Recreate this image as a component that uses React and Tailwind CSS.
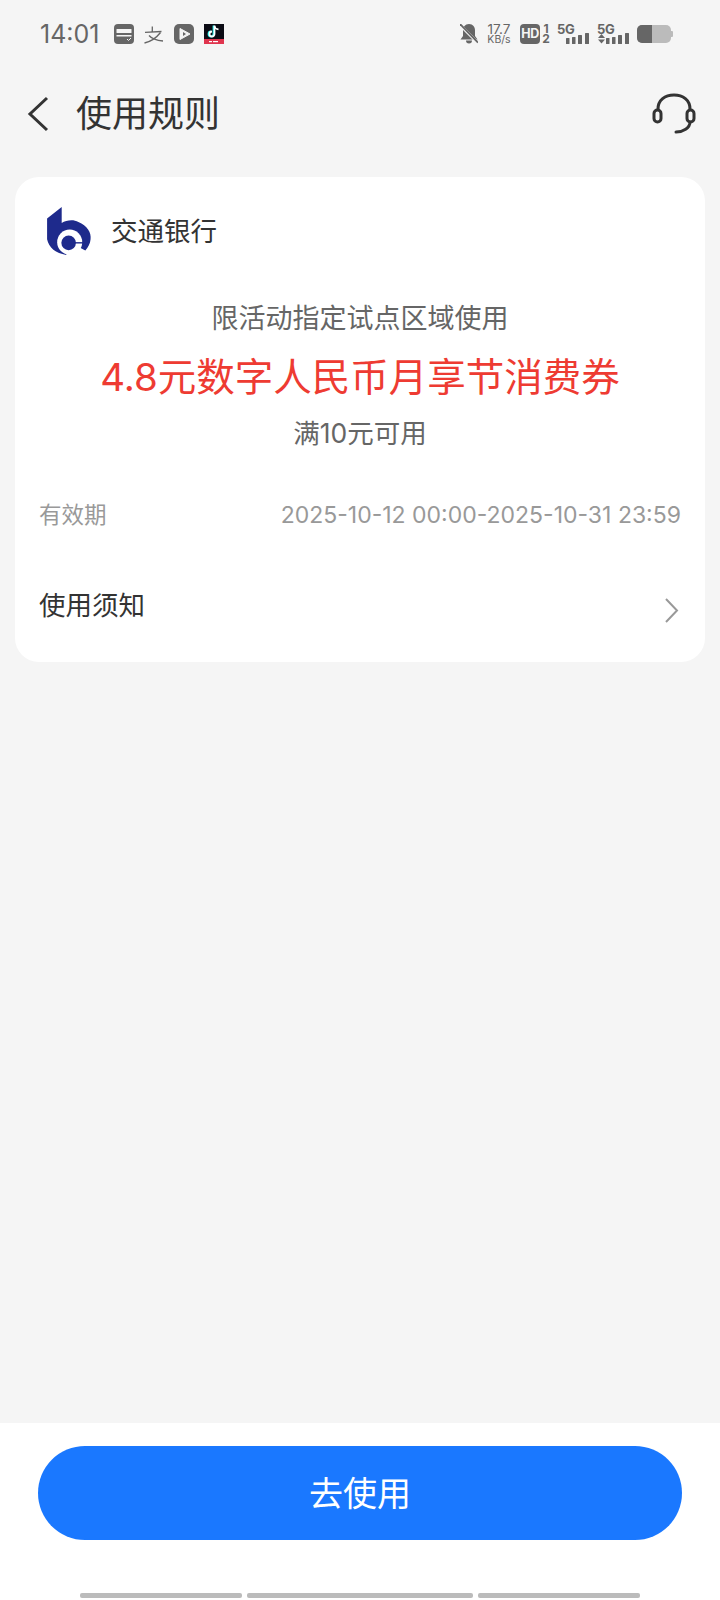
const sans = "font-['Inter','Noto_Sans_CJK_SC',sans-serif]";

function StatusBar() {
  return (
    <div className="flex h-[68px] items-center pl-[40px] pr-[47px] text-[#666]">
      <span className="mr-[15px] text-[25px] leading-none">14:01</span>
      <div className="flex items-center gap-[10px]">
        <svg width="20" height="20" viewBox="0 0 20 20">
          <rect width="20" height="20" rx="4" fill="#666" />
          <rect x="2.500" y="5" width="15" height="4" rx="0.5" fill="#f5f5f5" />
          <rect x="2.500" y="11" width="15" height="1.500" fill="#f5f5f5" />
          <path d="M13 15l1.500 1.500L17 14" stroke="#f5f5f5" strokeWidth="1" fill="none" />
        </svg>
        <svg width="20" height="20" viewBox="0 0 20 20" fill="none" stroke="#666" strokeWidth="1.300">
          <path d="M1 8.300L17.500 7.500M8.300 2.500V8M16.500 8.500C13 13 7 17.500 0.500 19M5 11.500C8 15 13 16.500 19 17" />
        </svg>
        <svg width="20" height="20" viewBox="0 0 20 20">
          <rect width="20" height="20" rx="5" fill="#666" />
          <path d="M6 4.500l10 5.500-10 5.500z" fill="#f5f5f5" stroke="#f5f5f5" strokeLinejoin="round" />
          <path d="M9 8l3 2-3 2z" fill="#666" />
        </svg>
        <svg width="20" height="20" viewBox="0 0 20 20">
          <rect width="20" height="15" fill="#0b0b14" />
          <rect y="15" width="20" height="5" fill="#e0354e" />
          <path d="M9.500 1.500v8.500a2.500 2.500 0 1 1-2.500-2.500" fill="none" stroke="#25f4ee" strokeWidth="1.800" />
          <path d="M10.500 1.500v8.500a2.500 2.500 0 1 1-2.500-2.500" fill="none" stroke="#fff" strokeWidth="1.800" />
          <path d="M10.500 2c.3 2 1.700 3.200 4 3.400" fill="none" stroke="#fff" strokeWidth="1.600" />
          <rect x="5" y="17" width="3" height="1.200" fill="#fff" />
          <rect x="9" y="17" width="5" height="1.200" fill="#fff" />
        </svg>
      </div>
      <div className="ml-auto flex items-center">
        <svg width="18" height="20" viewBox="0 0 18 20" className="mr-[9px]">
          <path d="M9 0c4 0 6 3 6 6.500V12l2.500 3.500H.5L3 12V6.500C3 3 5 0 9 0z" fill="#666" />
          <path d="M6 16.500a3 3 0 0 0 6 0z" fill="#666" />
          <path d="M0 1l18 18" stroke="#f5f5f5" strokeWidth="3" />
          <path d="M0 0l18 18.500" stroke="#666" strokeWidth="1.800" />
        </svg>
        <div className="mr-[9px] w-[24px] text-center text-[#666]">
          <div className="text-[13.500px] leading-[11px]">17.7</div>
          <div className="text-[10.500px] leading-[10px]">KB/s</div>
        </div>
        <div className="flex h-[20px] w-[20px] items-center justify-center rounded-[4px] bg-[#666] text-[12.500px] font-bold leading-none tracking-[-0.5px] text-[#f5f5f5]">HD</div>
        <div className="ml-[2px] w-[8px] text-center text-[12px] font-bold leading-[10px]">
          <div>1</div>
          <div>2</div>
        </div>
        <Signal className="ml-[7px]" />
        <Signal className="ml-[8px]" arrows />
        <div className="ml-[8px] flex h-[18px] w-[34px] overflow-hidden rounded-[5px] bg-[#bbb]">
          <div className="h-full w-[15px] bg-[#666]" />
        </div>
        <div className="h-[6px] w-[2px] rounded-r-[1px] bg-[#bbb]" />
      </div>
    </div>
  );
}

function Signal({ className, arrows }) {
  return (
    <div className={`flex h-[20px] w-[32px] flex-col ${className}`}>
      <span className="text-[13px] font-bold leading-[10px] tracking-[-0.3px]">5G</span>
      <svg width="32" height="11" viewBox="0 0 32 11" className="-mt-px">
        {arrows && <path d="M1 5l3.500-4 3.500 4zM1 6.500h7l-3.500 4z" fill="#666" />}
        <rect x="9" y="5" width="3.500" height="6" rx="0.5" fill="#666" />
        <rect x="15" y="4" width="3.500" height="7" rx="0.5" fill="#666" />
        <rect x="21" y="2" width="4" height="9" rx="0.5" fill="#666" />
        <rect x="28" y="0" width="4" height="11" rx="0.5" fill="#666" />
      </svg>
    </div>
  );
}

function BankLogo() {
  return (
    <svg width="46" height="48" viewBox="20 12 126 138">
      <path d="M20 45L62 12V58C75 50 95 47 110 55C135 65 148 85 145 105C144 118 138 128 130 137L85 113L75 150C45 145 25 130 20 105Z" fill="#1e2a8c" />
      <circle cx="85" cy="113" r="36" fill="#fff" />
      <circle cx="82" cy="115" r="21" fill="#1e2a8c" />
      <rect x="98" y="113" width="30" height="4" fill="#1e2a8c" />
    </svg>
  );
}

export default function App() {
  return (
    <div className={`flex h-[1600px] w-[720px] flex-col overflow-hidden bg-[#f5f5f5] ${sans}`}>
      <StatusBar />

      <div className="mt-[1px] flex h-[90px] items-center pl-[27px] pr-[24px]">
        <svg width="22" height="36" viewBox="0 0 22 36" fill="none" stroke="#333" strokeWidth="3" className="mr-[27px]">
          <path d="M20 2L3 18l17 16" />
        </svg>
        <span className="text-[36px] leading-none text-[#333]">使用规则</span>
        <svg width="44" height="42" viewBox="0 0 44 42" fill="none" stroke="#333" strokeWidth="3" className="ml-auto">
          <path d="M6 16C6 7 13 2 22 2s16 5 16 14" />
          <rect x="2" y="17" width="7" height="12" rx="3.500" />
          <rect x="35" y="17" width="7" height="12" rx="3.500" />
          <path d="M38 29c0 6-7 10-14 10" strokeLinecap="round" />
        </svg>
      </div>

      <div className="mx-[15px] mt-[18px] flex h-[485px] flex-col rounded-[24px] bg-white">
        <div className="mt-[30px] flex h-[48px] items-center pl-[31px]">
          <BankLogo />
          <span className="ml-[19px] text-[26.500px] leading-none text-[#333]">交通银行</span>
        </div>
        <div className="mt-[46px] text-center text-[27px] leading-[36px] text-[#666]">限活动指定试点区域使用</div>
        <div className="mt-[18px] text-center text-[38.500px] leading-[44px] text-[#ee3b32]">4.8元数字人民币月享节消费券</div>
        <div className="mt-[16px] text-center text-[26.500px] leading-[36px] text-[#666]">满10元可用</div>
        <div className="mt-[46px] flex items-center justify-between px-[24px] text-[#999]">
          <span className="text-[22.500px] leading-[36px]">有效期</span>
          <span className="text-[23px] leading-[36px]">2025-10-12 00:00-2025-10-31 23:59</span>
        </div>
        <div className="mt-[54px] flex items-start justify-between pl-[24px] pr-[26px]">
          <span className="text-[26.500px] leading-[36px] text-[#333]">使用须知</span>
          <svg width="15" height="25" viewBox="0 0 15 25" fill="none" stroke="#999" strokeWidth="2" className="mt-[11px]">
            <path d="M2 1l11 11.500L2 24" />
          </svg>
        </div>
      </div>

      <div className="mt-auto flex h-[177px] flex-col items-center bg-white">
        <button className="mt-[23px] flex h-[94px] w-[644px] items-center justify-center rounded-full bg-[#1a78ff] text-[34px] text-white">去使用</button>
        <div className="mt-[53px] flex gap-[5px]">
          <div className="h-[5px] w-[162px] rounded-[2px] bg-[#bbb]" />
          <div className="h-[5px] w-[226px] rounded-[2px] bg-[#bbb]" />
          <div className="h-[5px] w-[162px] rounded-[2px] bg-[#bbb]" />
        </div>
      </div>
    </div>
  );
}
